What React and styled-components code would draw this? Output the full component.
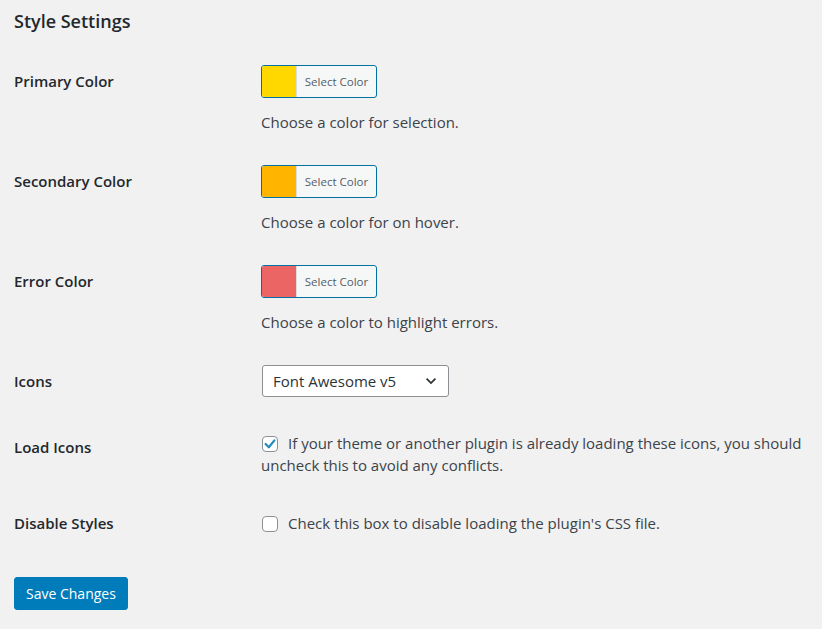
import React from "react";
import styled, { createGlobalStyle } from "styled-components";

const Global = createGlobalStyle`
  html, body { margin: 0; padding: 0; background: #f1f1f1; }
  body {
    font-family: "Open Sans", "Noto Sans", sans-serif;
    font-size: 15px;
    color: #23282d;
  }
`;

const Wrap = styled.form`
  padding-left: 14px;
`;

const Title = styled.h2`
  font-size: 18px;
  font-weight: 600;
  margin: 0;
  padding-top: 9px;
  line-height: 24px;
  color: #23282d;
`;

const Table = styled.div`
  margin-top: 17px;
  display: flex;
  flex-direction: column;
`;

const Row = styled.div`
  display: flex;
`;

const Label = styled.div`
  width: 237px;
  flex: none;
  padding: ${(p) => p.$top || 20}px 10px 0 0;
  box-sizing: border-box;
  font-weight: 600;
  line-height: 22px;
`;

const Field = styled.div`
  flex: 1;
  padding: ${(p) => p.$top || 15}px 10px ${(p) => p.$bottom || 15}px 10px;
  line-height: 22px;
  color: #3c434a;
`;

const ColorButton = styled.button`
  display: flex;
  height: 33px;
  width: 116px;
  padding: 0;
  border: 1px solid #0071a1;
  border-radius: 3px;
  background: #f6f7f7;
  overflow: hidden;
  cursor: pointer;
  font-family: inherit;
`;

const Swatch = styled.span`
  width: 34px;
  height: 100%;
  background: ${(p) => p.$color};
  border-right: 1px solid #ddd;
`;

const SwatchText = styled.span`
  flex: 1;
  font-size: 11.5px;
  color: #555d66;
  line-height: 31px;
  text-align: center;
`;

const Description = styled.p`
  margin: 13px 0 2px;
  line-height: 22px;
`;

const Select = styled.div`
  display: flex;
  align-items: center;
  justify-content: space-between;
  width: 187px;
  height: 32px;
  margin-left: 1px;
  box-sizing: border-box;
  background: #fff;
  border: 1px solid #8c8f94;
  border-radius: 3px;
  padding: 0 9px 0 10px;
  color: #2c3338;
`;

const Box = styled.span`
  display: inline-block;
  vertical-align: -3px;
  width: 16px;
  height: 16px;
  margin: 0 10px 0 1px;
  box-sizing: border-box;
  border: 1px solid #8c8f94;
  border-radius: 4px;
  background: #fff;
  position: relative;

  svg {
    position: absolute;
    left: -1px;
    top: -1px;
  }
`;

const Submit = styled.div`
  padding: 28px 0 20px;
`;

const SaveButton = styled.button`
  height: 33px;
  padding: 0 11px;
  background: #007cba;
  border: 1px solid #007cba;
  border-radius: 3px;
  color: #fff;
  font-family: inherit;
  font-size: 14px;
`;

function ColorField({ color, text }) {
  return (
    <Field>
      <ColorButton type="button">
        <Swatch $color={color} />
        <SwatchText>Select Color</SwatchText>
      </ColorButton>
      <Description>{text}</Description>
    </Field>
  );
}

function Check({ checked }) {
  return (
    <Box>
      {checked && (
        <svg width="16" height="16" viewBox="0 0 20 20">
          <path d="M4.5 10 L8.5 14 L15.5 5.5" fill="none" stroke="#1e8cbe" strokeWidth="2.8" strokeLinecap="round" strokeLinejoin="round" />
        </svg>
      )}
    </Box>
  );
}

export default function App() {
  return (
    <Wrap>
      <Global />
      <Title>Style Settings</Title>
      <Table>
        <Row>
          <Label>Primary Color</Label>
          <ColorField color="#ffd800" text="Choose a color for selection." />
        </Row>
        <Row>
          <Label>Secondary Color</Label>
          <ColorField color="#ffb400" text="Choose a color for on hover." />
        </Row>
        <Row>
          <Label>Error Color</Label>
          <ColorField color="#ec6565" text="Choose a color to highlight errors." />
        </Row>
        <Row>
          <Label>Icons</Label>
          <Field>
            <Select>
              <span>Font Awesome v5</span>
              <svg width="16" height="16" viewBox="0 0 20 20">
                <path d="M4.5 7 L10 12.5 L15.5 7" fill="none" stroke="#2c3338" strokeWidth="2.2" />
              </svg>
            </Select>
          </Field>
        </Row>
        <Row>
          <Label $top={24}>Load Icons</Label>
          <Field $top={20} $bottom={16}>
            <label>
              <Check checked />
              If your theme or another plugin is already loading these icons, you should uncheck this to avoid any conflicts.
            </label>
          </Field>
        </Row>
        <Row>
          <Label>Disable Styles</Label>
          <Field $top={20}>
            <label>
              <Check />
              Check this box to disable loading the plugin's CSS file.
            </label>
          </Field>
        </Row>
      </Table>
      <Submit>
        <SaveButton type="button">Save Changes</SaveButton>
      </Submit>
    </Wrap>
  );
}
